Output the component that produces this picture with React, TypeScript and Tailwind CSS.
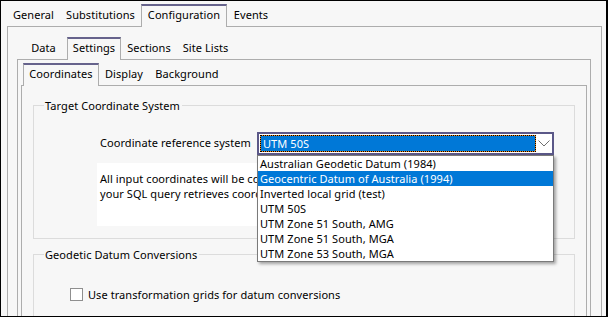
import React from "react";

const sel =
  "relative z-10 h-[23px] -mb-px flex items-center justify-center border-x border-t-2 border-x-[#adadad] border-t-[#66638c] bg-[#f7f7f7] pb-[2px] whitespace-nowrap";
const unsel = "h-[21px] flex items-center justify-center whitespace-nowrap";

const items = [
  "Australian Geodetic Datum (1984)",
  "Geocentric Datum of Australia (1994)",
  "Inverted local grid (test)",
  "UTM 50S",
  "UTM Zone 51 South, AMG",
  "UTM Zone 51 South, MGA",
  "UTM Zone 53 South, MGA",
];

export default function App() {
  return (
    <div className="relative w-[608px] h-[317px] overflow-hidden border-y border-l border-r-2 border-black bg-[#f7f7f7] font-['Noto_Sans',sans-serif] text-[11px] tracking-[0.07px] text-black flex flex-col">
      {/* top tabs */}
      <div className="h-[25px] flex items-end pl-[6px] shrink-0">
        <div className={`${unsel} w-[53px]`}>General</div>
        <div className={`${unsel} w-[81px]`}>Substitutions</div>
        <div className={`${sel} w-[86px]`}>Configuration</div>
        <div className={`${unsel} w-[48px]`}>Events</div>
      </div>
      {/* outer panel */}
      <div className="ml-[6px] w-[595px] flex-1 border-x border-t border-[#adadad] flex flex-col">
        <div className="h-[32px] flex items-end pl-[12px] shrink-0">
          <div className={`${unsel} w-[47px]`}>Data</div>
          <div className={`${sel} w-[54px]`}>Settings</div>
          <div className={`${unsel} w-[56px]`}>Sections</div>
          <div className={`${unsel} w-[57px]`}>Site Lists</div>
        </div>
        {/* second panel */}
        <div className="ml-[9px] w-[574px] flex-1 border-x border-t border-[#adadad] flex flex-col">
          <div className="h-[25px] flex items-end pl-[5px] shrink-0">
            <div className={`${sel} w-[76px]`}>Coordinates</div>
            <div className={`${unsel} w-[50px]`}>Display</div>
            <div className={`${unsel} w-[76px]`}>Background</div>
          </div>
          {/* third panel */}
          <div className="ml-[3px] w-[566px] flex-1 border-x border-t border-[#adadad]">
            <fieldset className="ml-[11px] mt-[12px] w-[542px] h-[141px] border border-[#dcdcdc]">
              <legend className="ml-[10px] pl-[1px] pr-[2px] leading-[15px]">Target Coordinate System</legend>
              <div className="mt-[19px] ml-[66px] flex items-center h-[23px]">
                <div className="w-[157px] whitespace-nowrap">Coordinate reference system</div>
                <div className="w-[297px] h-[23px] border-2 border-[#5b5888] bg-white p-px flex items-center">
                  <div className="w-[276px] h-[17px] bg-[#f08a1c]">
                    <div className="w-full h-full border border-dotted border-black bg-[#0078d7] bg-clip-padding text-white leading-[15px] pl-[2px]">
                      UTM 50S
                    </div>
                  </div>
                  <div className="flex-1 flex items-center justify-center">
                    <svg width="12" height="7" viewBox="0 0 12 7">
                      <polyline points="0.5,0.5 6,6 11.5,0.5" fill="none" stroke="#6f6f6f" strokeWidth="1" />
                    </svg>
                  </div>
                </div>
              </div>
              <div className="mt-[8px] ml-[63px] w-[456px] h-[63px] bg-white pt-[8px] pl-[3px] leading-[15px] overflow-hidden whitespace-nowrap">
                <div>All input coordinates will be converted to the target coordinate system. Ensure that</div>
                <div>your SQL query retrieves coordinates in the source coordinate system.</div>
              </div>
            </fieldset>
            <fieldset className="ml-[11px] mt-[8px] w-[542px] h-[80px] border border-[#dcdcdc]">
              <legend className="ml-[10px] pl-[1px] pr-[2px] leading-[15px]">Geodetic Datum Conversions</legend>
              <div className="mt-[25px] ml-[36px] h-[15px] flex items-center">
                <div className="w-[13px] h-[13px] border border-[#8f8f8f] bg-white" />
                <div className="ml-[5px] whitespace-nowrap leading-[15px]">Use transformation grids for datum conversions</div>
              </div>
            </fieldset>
          </div>
        </div>
      </div>
      {/* dropdown list overlay */}
      <div className="absolute left-[256px] top-[154px] w-[297px] h-[107px] border border-[#7a7a7a] bg-white shadow-[2px_2px_3px_rgba(0,0,0,0.35)]">
        {items.map((t, i) => (
          <div
            key={t}
            className={`h-[15px] leading-[15px] pl-[2px] whitespace-nowrap ${i === 1 ? "bg-[#0078d7] text-white" : ""}`}
          >
            {t}
          </div>
        ))}
      </div>
    </div>
  );
}
